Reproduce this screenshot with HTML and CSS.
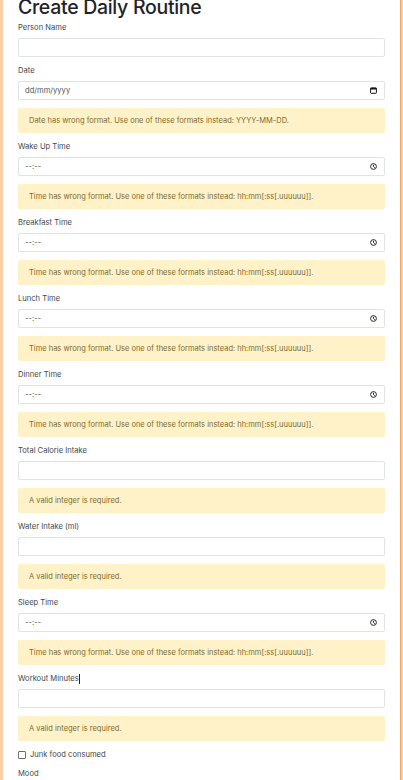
FILE: index.html
```html
<!DOCTYPE html>
<html lang="en">
<head>
<meta charset="utf-8">
<title>Create Daily Routine</title>
<link rel="stylesheet" href="styles.css">
</head>
<body>
<div class="page">
  <h1 class="title">Create Daily Routine</h1>

  <div class="field">
    <label class="label">Person Name</label>
    <div class="input"></div>
  </div>

  <div class="field">
    <label class="label">Date</label>
    <div class="input"><span class="ph">dd/mm/yyyy</span>
      <svg class="icon" width="7" height="7" viewBox="0 0 7 7"><rect x="0.6" y="0.9" width="5.8" height="5.4" rx="0.6" fill="none" stroke="#111" stroke-width="1"/><rect x="0.6" y="0.9" width="5.8" height="1.6" fill="#111"/></svg>
    </div>
  </div>
  <div class="alert">Date has wrong format. Use one of these formats instead: YYYY-MM-DD.</div>

  <div class="field">
    <label class="label">Wake Up Time</label>
    <div class="input"><span class="ph">--:--</span>
      <svg class="icon" width="7" height="7" viewBox="0 0 7 7"><circle cx="3.5" cy="3.5" r="2.9" fill="none" stroke="#111" stroke-width="0.9"/><path d="M3.5 1.8V3.6L4.8 4.8" fill="none" stroke="#111" stroke-width="0.9"/></svg>
    </div>
  </div>
  <div class="alert">Time has wrong format. Use one of these formats instead: hh:mm[:ss[.uuuuuu]].</div>

  <div class="field">
    <label class="label">Breakfast Time</label>
    <div class="input"><span class="ph">--:--</span>
      <svg class="icon" width="7" height="7" viewBox="0 0 7 7"><circle cx="3.5" cy="3.5" r="2.9" fill="none" stroke="#111" stroke-width="0.9"/><path d="M3.5 1.8V3.6L4.8 4.8" fill="none" stroke="#111" stroke-width="0.9"/></svg>
    </div>
  </div>
  <div class="alert">Time has wrong format. Use one of these formats instead: hh:mm[:ss[.uuuuuu]].</div>

  <div class="field">
    <label class="label">Lunch Time</label>
    <div class="input"><span class="ph">--:--</span>
      <svg class="icon" width="7" height="7" viewBox="0 0 7 7"><circle cx="3.5" cy="3.5" r="2.9" fill="none" stroke="#111" stroke-width="0.9"/><path d="M3.5 1.8V3.6L4.8 4.8" fill="none" stroke="#111" stroke-width="0.9"/></svg>
    </div>
  </div>
  <div class="alert">Time has wrong format. Use one of these formats instead: hh:mm[:ss[.uuuuuu]].</div>

  <div class="field">
    <label class="label">Dinner Time</label>
    <div class="input"><span class="ph">--:--</span>
      <svg class="icon" width="7" height="7" viewBox="0 0 7 7"><circle cx="3.5" cy="3.5" r="2.9" fill="none" stroke="#111" stroke-width="0.9"/><path d="M3.5 1.8V3.6L4.8 4.8" fill="none" stroke="#111" stroke-width="0.9"/></svg>
    </div>
  </div>
  <div class="alert">Time has wrong format. Use one of these formats instead: hh:mm[:ss[.uuuuuu]].</div>

  <div class="field">
    <label class="label">Total Calorie Intake</label>
    <div class="input"></div>
  </div>
  <div class="alert">A valid integer is required.</div>

  <div class="field">
    <label class="label">Water Intake (ml)</label>
    <div class="input"></div>
  </div>
  <div class="alert">A valid integer is required.</div>

  <div class="field">
    <label class="label">Sleep Time</label>
    <div class="input"><span class="ph">--:--</span>
      <svg class="icon" width="7" height="7" viewBox="0 0 7 7"><circle cx="3.5" cy="3.5" r="2.9" fill="none" stroke="#111" stroke-width="0.9"/><path d="M3.5 1.8V3.6L4.8 4.8" fill="none" stroke="#111" stroke-width="0.9"/></svg>
    </div>
  </div>
  <div class="alert">Time has wrong format. Use one of these formats instead: hh:mm[:ss[.uuuuuu]].</div>

  <div class="field">
    <label class="label">Workout Minutes<span class="caret"></span></label>
    <div class="input"></div>
  </div>
  <div class="alert">A valid integer is required.</div>

  <div class="check">
    <span class="box"></span>
    <span>Junk food consumed</span>
  </div>

  <div class="field">
    <label class="label">Mood</label>
  </div>
</div>
</body>
</html>
```
FILE: styles.css
```css
html, body {
  margin: 0;
  padding: 0;
}
body {
  background: #f9cfa4;
  font-family: Inter, "Liberation Sans", sans-serif;
  color: #3a3d40;
  height: 780px;
  overflow: hidden;
}
.page {
  margin: 0 2px 0 3px;
  background: #fff;
  border-right: 1px solid #efa565;
  padding: 0 15px;
  min-height: 780px;
  box-sizing: border-box;
}
.title {
  margin: 0;
  margin-top: -5px;
  padding-bottom: 3px;
  font-size: 19.5px;
  line-height: 24px;
  font-weight: 500;
  color: #1f2328;
  letter-spacing: -0.3px;
}
.field {
  display: flex;
  flex-direction: column;
  gap: 4px;
  margin-bottom: 8px;
}
.label {
  font-size: 7.6px;
  line-height: 12px;
  color: #45484b;
  display: flex;
  align-items: center;
}
.caret {
  display: inline-block;
  width: 1px;
  height: 10px;
  background: #222;
}
.input {
  height: 19px;
  box-sizing: border-box;
  border: 1px solid #e0e3e6;
  border-radius: 2px;
  display: flex;
  align-items: center;
  justify-content: space-between;
  padding: 0 6px 0 6px;
}
.ph {
  font-size: 7.6px;
  color: #50555a;
}
.icon {
  display: block;
  margin-right: 1px;
}
.alert {
  background: #fff2c8;
  color: #806a2c;
  font-size: 7.5px;
  line-height: 12px;
  padding: 6.5px 11px;
  margin-bottom: 8px;
  border-radius: 2px;
}
.check {
  display: flex;
  align-items: center;
  gap: 4px;
  font-size: 7.6px;
  line-height: 12px;
  color: #45484b;
  margin-bottom: 7px;
}
.box {
  width: 6px;
  height: 6px;
  border: 1px solid #6e6e6e;
  border-radius: 1px;
}
```
